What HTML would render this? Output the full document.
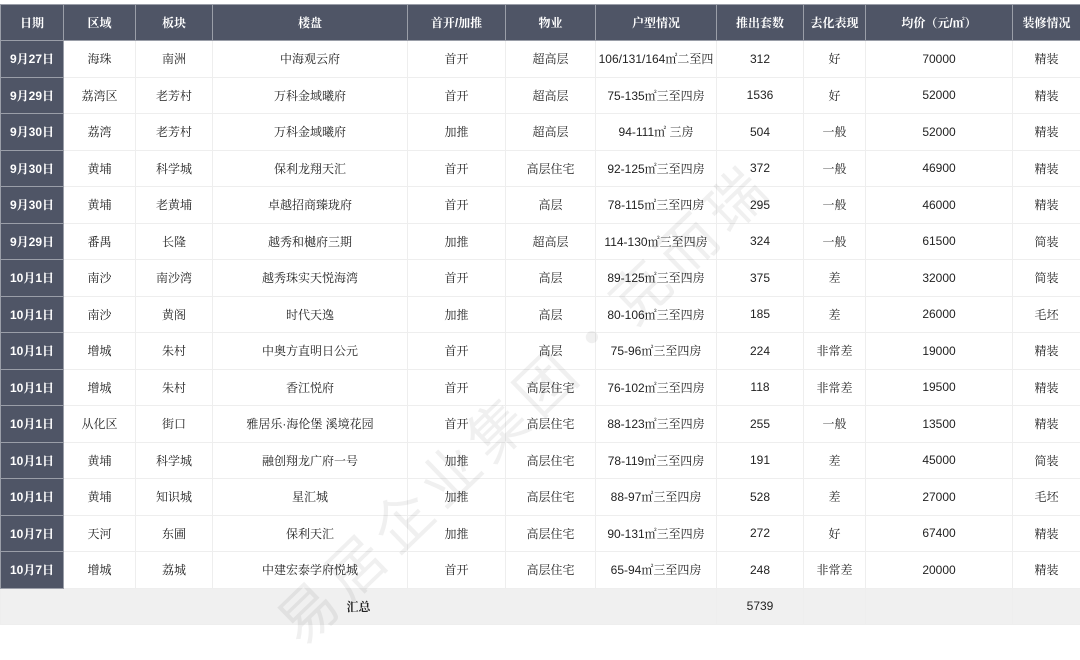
<!DOCTYPE html><html><head><meta charset="utf-8"><style>
body{margin:0;width:1080px;height:626px;background:#fff;overflow:hidden;position:relative}
table{position:absolute;top:4px;left:0;border-collapse:collapse;table-layout:fixed;width:1080px;font-family:"Liberation Sans","Noto Serif CJK SC",serif;font-size:12px;color:#222}
td,th{height:35.5px;padding:0;text-align:center;border:1px solid #eeeeee;white-space:nowrap;overflow:hidden}
th{background:#4f5566;color:#fff;font-weight:bold;border:1px solid #9a9ea8;height:35px}
td.d{background:#4f5566;color:#fff;font-weight:bold;border-color:#9a9ea8}
tr.t td{background:#f0f0f0;height:35px}
.wm{position:absolute;left:255px;top:600px;font-family:"Noto Sans CJK SC",sans-serif;font-size:58px;color:rgba(0,0,0,0.06);transform:rotate(-44deg);transform-origin:left top;letter-spacing:8px;white-space:nowrap}
</style></head><body>
<table>
<colgroup><col style="width:63px"><col style="width:72px"><col style="width:77px"><col style="width:195px"><col style="width:98px"><col style="width:90px"><col style="width:121px"><col style="width:87px"><col style="width:62px"><col style="width:147px"><col style="width:68px"></colgroup>
<tr><th>日期</th><th>区域</th><th>板块</th><th>楼盘</th><th>首开/加推</th><th>物业</th><th>户型情况</th><th>推出套数</th><th>去化表现</th><th>均价（元/㎡）</th><th>装修情况</th></tr>
<tr><td class="d">9月27日</td><td>海珠</td><td>南洲</td><td>中海观云府</td><td>首开</td><td>超高层</td><td>106/131/164㎡二至四</td><td>312</td><td>好</td><td>70000</td><td>精装</td></tr>
<tr><td class="d">9月29日</td><td>荔湾区</td><td>老芳村</td><td>万科金域曦府</td><td>首开</td><td>超高层</td><td>75-135㎡三至四房</td><td>1536</td><td>好</td><td>52000</td><td>精装</td></tr>
<tr><td class="d">9月30日</td><td>荔湾</td><td>老芳村</td><td>万科金域曦府</td><td>加推</td><td>超高层</td><td>94-111㎡ 三房</td><td>504</td><td>一般</td><td>52000</td><td>精装</td></tr>
<tr><td class="d">9月30日</td><td>黄埔</td><td>科学城</td><td>保利龙翔天汇</td><td>首开</td><td>高层住宅</td><td>92-125㎡三至四房</td><td>372</td><td>一般</td><td>46900</td><td>精装</td></tr>
<tr><td class="d">9月30日</td><td>黄埔</td><td>老黄埔</td><td>卓越招商臻珑府</td><td>首开</td><td>高层</td><td>78-115㎡三至四房</td><td>295</td><td>一般</td><td>46000</td><td>精装</td></tr>
<tr><td class="d">9月29日</td><td>番禺</td><td>长隆</td><td>越秀和樾府三期</td><td>加推</td><td>超高层</td><td>114-130㎡三至四房</td><td>324</td><td>一般</td><td>61500</td><td>简装</td></tr>
<tr><td class="d">10月1日</td><td>南沙</td><td>南沙湾</td><td>越秀珠实天悦海湾</td><td>首开</td><td>高层</td><td>89-125㎡三至四房</td><td>375</td><td>差</td><td>32000</td><td>简装</td></tr>
<tr><td class="d">10月1日</td><td>南沙</td><td>黄阁</td><td>时代天逸</td><td>加推</td><td>高层</td><td>80-106㎡三至四房</td><td>185</td><td>差</td><td>26000</td><td>毛坯</td></tr>
<tr><td class="d">10月1日</td><td>增城</td><td>朱村</td><td>中奥方直明日公元</td><td>首开</td><td>高层</td><td>75-96㎡三至四房</td><td>224</td><td>非常差</td><td>19000</td><td>精装</td></tr>
<tr><td class="d">10月1日</td><td>增城</td><td>朱村</td><td>香江悦府</td><td>首开</td><td>高层住宅</td><td>76-102㎡三至四房</td><td>118</td><td>非常差</td><td>19500</td><td>精装</td></tr>
<tr><td class="d">10月1日</td><td>从化区</td><td>街口</td><td>雅居乐·海伦堡 溪境花园</td><td>首开</td><td>高层住宅</td><td>88-123㎡三至四房</td><td>255</td><td>一般</td><td>13500</td><td>精装</td></tr>
<tr><td class="d">10月1日</td><td>黄埔</td><td>科学城</td><td>融创翔龙广府一号</td><td>加推</td><td>高层住宅</td><td>78-119㎡三至四房</td><td>191</td><td>差</td><td>45000</td><td>简装</td></tr>
<tr><td class="d">10月1日</td><td>黄埔</td><td>知识城</td><td>星汇城</td><td>加推</td><td>高层住宅</td><td>88-97㎡三至四房</td><td>528</td><td>差</td><td>27000</td><td>毛坯</td></tr>
<tr><td class="d">10月7日</td><td>天河</td><td>东圃</td><td>保利天汇</td><td>加推</td><td>高层住宅</td><td>90-131㎡三至四房</td><td>272</td><td>好</td><td>67400</td><td>精装</td></tr>
<tr><td class="d">10月7日</td><td>增城</td><td>荔城</td><td>中建宏泰学府悦城</td><td>首开</td><td>高层住宅</td><td>65-94㎡三至四房</td><td>248</td><td>非常差</td><td>20000</td><td>精装</td></tr>
<tr class="t"><td colspan="7" style="font-weight:bold">汇总</td><td>5739</td><td></td><td></td><td></td></tr>
</table>
<div class="wm">易居企业集团·克而瑞</div>
</body></html>
